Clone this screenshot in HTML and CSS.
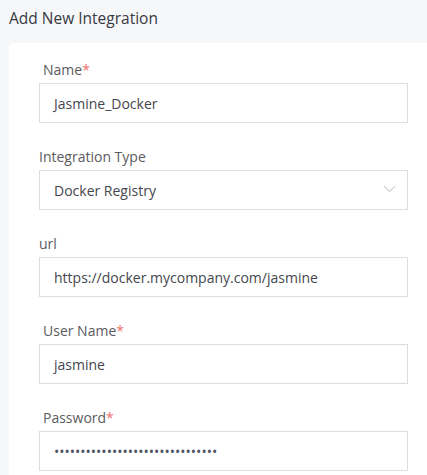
FILE: index.html
```html
<!DOCTYPE html>
<html lang="en">
<head>
<meta charset="utf-8">
<title>Add New Integration</title>
<link rel="stylesheet" href="styles.css">
</head>
<body>
<div class="page">
  <h1 class="title">Add New Integration</h1>
  <div class="panel">
    <div class="field">
      <div class="label label-req">Name<span class="req">*</span></div>
      <div class="input">Jasmine_Docker</div>
    </div>
    <div class="field">
      <div class="label">Integration Type</div>
      <div class="input select">
        <span>Docker Registry</span>
        <svg class="chev" width="13" height="8" viewBox="0 0 13 8"><path d="M1 1.2 L6.5 6.5 L12 1.2" fill="none" stroke="#d4cbd3" stroke-width="1.1"/></svg>
      </div>
    </div>
    <div class="field">
      <div class="label">url</div>
      <div class="input">https://docker.mycompany.com/jasmine</div>
    </div>
    <div class="field">
      <div class="label label-req">User Name<span class="req">*</span></div>
      <div class="input">jasmine</div>
    </div>
    <div class="field">
      <div class="label label-req">Password<span class="req">*</span></div>
      <div class="input pw">•••••••••••••••••••••••••••••••</div>
    </div>
  </div>
</div>
</body>
</html>
```
FILE: styles.css
```css
html, body {
  margin: 0;
  padding: 0;
}
body {
  background: #f6f7f9;
  font-family: "Open Sans", "Noto Sans", sans-serif;
  overflow: hidden;
  width: 427px;
  height: 475px;
}
.page {
  display: flex;
  flex-direction: column;
}
.title {
  margin: 0;
  padding: 7px 0 0 9px;
  font-size: 15.5px;
  line-height: 22px;
  font-weight: 400;
  color: #363a44;
  margin-bottom: 14px;
}
.panel {
  margin-left: 9px;
  background: #ffffff;
  border-radius: 4px 0 0 0;
  padding: 17px 0 0 30px;
  box-sizing: border-box;
  display: flex;
  flex-direction: column;
  gap: 24px;
  min-height: 440px;
}
.field {
  width: 369px;
  display: flex;
  flex-direction: column;
}
.label {
  font-size: 14px;
  line-height: 20px;
  color: #5b5b60;
  margin-bottom: 3px;
}
.label-req {
  padding-left: 4px;
}
.req {
  color: #ef6f6c;
}
.input {
  box-sizing: border-box;
  height: 40px;
  border: 1px solid #dcdce3;
  padding: 0 14px;
  display: flex;
  align-items: center;
  font-size: 14px;
  color: #44464d;
  background: #fff;
  white-space: nowrap;
}
.select {
  justify-content: space-between;
  padding-right: 11px;
}
.chev {
  display: block;
  margin-top: -2px;
}
.pw {
  font-size: 14px;
  color: #4f5566;
  padding-left: 14px;
}
```
